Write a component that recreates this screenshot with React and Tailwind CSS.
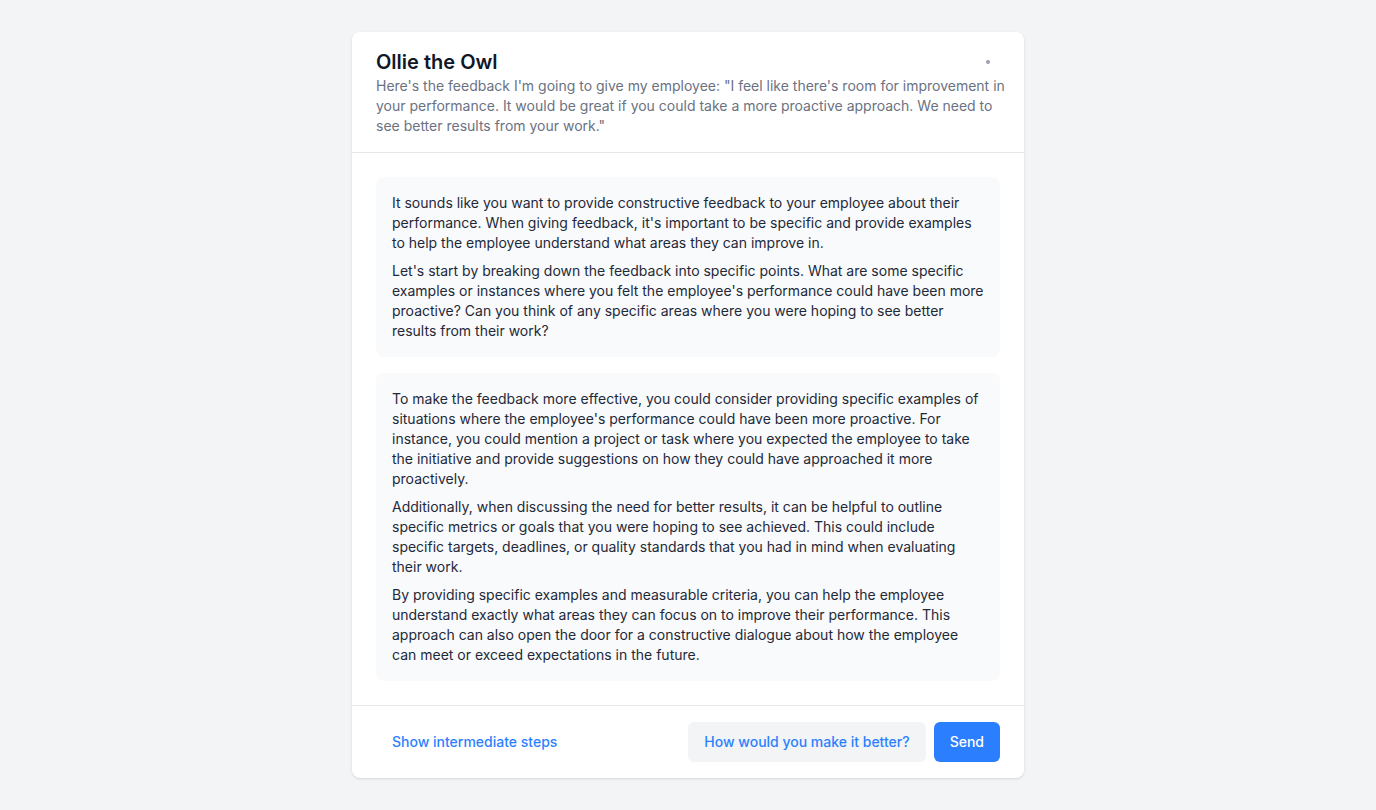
import React from 'react'

const firstReply = [
  "It sounds like you want to provide constructive feedback to your employee about their performance. When giving feedback, it's important to be specific and provide examples to help the employee understand what areas they can improve in.",
  "Let's start by breaking down the feedback into specific points. What are some specific examples or instances where you felt the employee's performance could have been more proactive? Can you think of any specific areas where you were hoping to see better results from their work?",
]

const secondReply = [
  "To make the feedback more effective, you could consider providing specific examples of situations where the employee's performance could have been more proactive. For instance, you could mention a project or task where you expected the employee to take the initiative and provide suggestions on how they could have approached it more proactively.",
  "Additionally, when discussing the need for better results, it can be helpful to outline specific metrics or goals that you were hoping to see achieved. This could include specific targets, deadlines, or quality standards that you had in mind when evaluating their work.",
  "By providing specific examples and measurable criteria, you can help the employee understand exactly what areas they can focus on to improve their performance. This approach can also open the door for a constructive dialogue about how the employee can meet or exceed expectations in the future.",
]

function Bubble({ paragraphs }) {
  return (
    <div className="bg-gray-50 rounded-lg p-4 space-y-2 text-sm text-gray-800">
      {paragraphs.map((p, i) => (
        <p key={i}>{p}</p>
      ))}
    </div>
  )
}

export default function App() {
  return (
    <div
      className="min-h-screen bg-gray-100 py-8"
      style={{ fontFamily: 'Inter, "Noto Sans", sans-serif' }}
    >
      <div className="max-w-2xl mx-auto bg-white rounded-lg shadow">
        {/* Header */}
        <div className="px-6 pt-4 pb-4 border-b border-gray-200">
          <div className="flex items-center justify-between">
            <h1 className="text-xl font-semibold text-gray-900">Ollie the Owl</h1>
            <span className="w-1 h-1 rounded-full bg-gray-400 mr-2.5" />
          </div>
          <p className="text-sm text-gray-500 -mr-2">
            Here's the feedback I'm going to give my employee: "I feel like there's room for improvement in your performance. It would be great if you could take a more proactive approach. We need to see better results from your work."
          </p>
        </div>

        {/* Messages */}
        <div className="px-6 py-6 space-y-4 border-b border-gray-200">
          <Bubble paragraphs={firstReply} />
          <Bubble paragraphs={secondReply} />
        </div>

        {/* Footer */}
        <div className="px-6 py-4 flex items-center justify-between">
          <button className="px-4 py-2.5 text-sm font-medium text-blue-500">
            Show intermediate steps
          </button>
          <div className="flex gap-2">
            <button className="px-4 py-2.5 rounded-md bg-gray-100 text-sm font-medium text-blue-500">
              How would you make it better?
            </button>
            <button className="px-4 py-2.5 rounded-md bg-blue-500 text-sm font-medium text-white">
              Send
            </button>
          </div>
        </div>
      </div>
    </div>
  )
}
